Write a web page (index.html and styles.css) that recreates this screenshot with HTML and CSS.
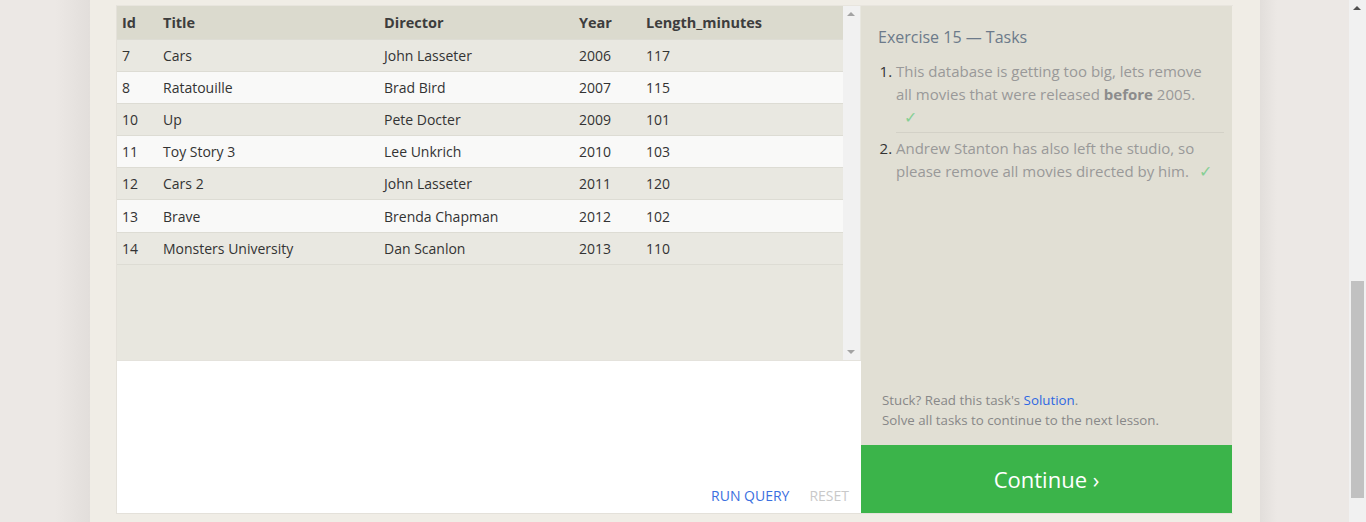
FILE: index.html
```html
<!DOCTYPE html>
<html lang="en">
<head>
<meta charset="utf-8">
<title>SQL Exercise 15</title>
<link rel="stylesheet" href="styles.css">
</head>
<body>
<div class="page">
  <div class="gutter-l"></div>
  <main class="container">
    <div class="workspace">
      <section class="left">
        <div class="results">
          <div class="table-wrap">
            <table class="data">
              <colgroup>
                <col class="c-id"><col class="c-title"><col class="c-dir"><col class="c-year"><col class="c-len">
              </colgroup>
              <thead>
                <tr><th>Id</th><th>Title</th><th>Director</th><th>Year</th><th>Length_minutes</th></tr>
              </thead>
              <tbody>
                <tr><td>7</td><td>Cars</td><td>John Lasseter</td><td>2006</td><td>117</td></tr>
                <tr><td>8</td><td>Ratatouille</td><td>Brad Bird</td><td>2007</td><td>115</td></tr>
                <tr><td>10</td><td>Up</td><td>Pete Docter</td><td>2009</td><td>101</td></tr>
                <tr><td>11</td><td>Toy Story 3</td><td>Lee Unkrich</td><td>2010</td><td>103</td></tr>
                <tr><td>12</td><td>Cars 2</td><td>John Lasseter</td><td>2011</td><td>120</td></tr>
                <tr><td>13</td><td>Brave</td><td>Brenda Chapman</td><td>2012</td><td>102</td></tr>
                <tr><td>14</td><td>Monsters University</td><td>Dan Scanlon</td><td>2013</td><td>110</td></tr>
              </tbody>
            </table>
          </div>
          <div class="vscroll">
            <span class="arrow arrow-up"></span>
            <span class="arrow arrow-down"></span>
          </div>
        </div>
        <div class="editor">
          <div class="actions">
            <span class="btn-run">RUN QUERY</span>
            <span class="btn-reset">RESET</span>
          </div>
        </div>
      </section>
      <aside class="tasks">
        <div class="tasks-body">
          <h2 class="tasks-title">Exercise 15 — Tasks</h2>
          <ol class="task-list">
            <li class="task">This database is getting too big, lets remove all movies that were released <strong>before</strong> 2005. <span class="check check-block">✓</span></li>
            <li class="task">Andrew Stanton has also left the studio, so please remove all movies directed by him. <span class="check">✓</span></li>
          </ol>
          <div class="help">
            <p>Stuck? Read this task's <a class="link">Solution</a>.</p>
            <p>Solve all tasks to continue to the next lesson.</p>
          </div>
        </div>
        <div class="continue">Continue ›</div>
      </aside>
    </div>
  </main>
  <div class="gutter-r"></div>
  <div class="page-scroll">
    <span class="arrow arrow-up dark"></span>
    <div class="thumb"></div>
  </div>
</div>
</body>
</html>
```
FILE: styles.css
```css
* { box-sizing: border-box; }
html, body { margin: 0; padding: 0; }
body {
  font-family: "Open Sans", "Noto Sans", sans-serif;
  background: #ece8e5;
  overflow: hidden;
}
.page {
  display: flex;
  height: 522px;
  width: 1366px;
}
.gutter-l {
  width: 90px;
  flex: none;
  background: linear-gradient(to right, #ece8e5 0, #ece8e5 55px, #e2dedb 90px);
}
.container {
  width: 1170px;
  flex: none;
  background: #f0ede6;
  padding: 5px 27px 0 26px;
}
.gutter-r {
  width: 89px;
  flex: none;
  background: linear-gradient(to right, #e2dedb 0, #ece8e5 17px, #ece8e5 100%);
}
.page-scroll {
  width: 17px;
  flex: none;
  background: #f1f1f1;
  position: relative;
}
.page-scroll .thumb {
  position: absolute;
  left: 2px;
  right: 2px;
  top: 281px;
  height: 217px;
  background: #c1c1c1;
}
.workspace {
  display: flex;
  height: 509px;
  border-top: 1px solid #e8e5de;
  border-left: 1px solid #e4e1da;
  border-bottom: 1px solid #e4e1da;
}
.left {
  width: 744px;
  flex: none;
  display: flex;
  flex-direction: column;
}
.results {
  height: 354px;
  display: flex;
  background: #e8e7df;
}
.table-wrap {
  flex: 1;
}
.vscroll {
  width: 17px;
  flex: none;
  background: #f1f1f1;
  position: relative;
  margin-right: 1px;
}
.arrow {
  position: absolute;
  left: 4px;
  width: 0;
  height: 0;
  border-left: 4px solid transparent;
  border-right: 4px solid transparent;
}
.arrow-up { top: 6px; border-bottom: 4px solid #a3a3a3; }
.arrow-down { bottom: 6px; border-top: 4px solid #a3a3a3; }
.arrow-up.dark { top: 6px; border-bottom-color: #505050; }
.data {
  width: 726px;
  border-collapse: collapse;
  table-layout: fixed;
  font-size: 14px;
  color: #333;
}
.c-id { width: 41px; }
.c-title { width: 221px; }
.c-dir { width: 195px; }
.c-year { width: 67px; }
.c-len { width: 202px; }
.data th {
  background: #dbdace;
  text-align: left;
  font-weight: 700;
  font-size: 14.5px;
  color: #3d3d3d;
  height: 33px;
  padding: 0 5px;
}
.data td {
  height: 32.2px;
  padding: 0 5px;
  border-top: 1px solid #dddcd4;
  white-space: nowrap;
}
.data tbody tr:nth-child(odd) td { background: #e9e8e1; }
.data tbody tr:nth-child(even) td { background: #f9f9f8; }
.data tbody tr:last-child td { border-bottom: 1px solid #dddcd4; }
.editor {
  flex: 1;
  background: #fff;
  border-top: 1px solid #e4e2dc;
  display: flex;
  align-items: flex-end;
  justify-content: flex-end;
}
.actions {
  display: flex;
  gap: 20px;
  padding: 0 12px 8px 0;
  font-size: 14px;
}
.btn-run { color: #3b6fe0; }
.btn-reset { color: #c9c9c9; }
.tasks {
  width: 371px;
  flex: none;
  display: flex;
  flex-direction: column;
}
.tasks-body {
  flex: 1;
  background: #e1dfd4;
  padding: 20px 8px 15px 17px;
  display: flex;
  flex-direction: column;
}
.tasks-title {
  margin: 0;
  font-size: 16px;
  font-weight: 400;
  line-height: 22px;
  color: #6c7a8a;
}
.task-list {
  margin: 12px 0 0 0;
  padding: 0 0 0 18px;
  color: #999;
  font-size: 15px;
  line-height: 23px;
}
.task-list li::marker { color: #333; }
.task {
  padding: 0 10px 3px 0;
}
.task + .task {
  border-top: 1px solid #d3d1c7;
  padding-top: 4px;
}
.task strong { color: #8c8c8c; }
.check {
  color: #87cf95;
  font-size: 16px;
  margin-left: 6px;
}
.check-block {
  display: block;
  margin-left: 0;
  padding-left: 8px;
}
.help {
  margin-top: auto;
  padding-left: 4px;
  font-size: 13.3px;
  line-height: 20px;
  color: #888;
}
.help p { margin: 0; }
.link { color: #2d68e2; }
.continue {
  height: 68px;
  flex: none;
  background: #3bb44a;
  color: #fff;
  font-size: 22px;
  display: flex;
  align-items: center;
  justify-content: center;
}
```
